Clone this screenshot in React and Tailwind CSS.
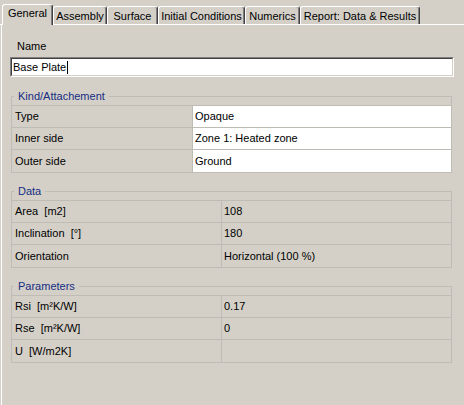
import React from "react";

const font = { fontFamily: '"Liberation Sans", Arial, sans-serif' };

function Tab({ label, w, selected }) {
  return (
    <div
      className={
        "flex items-center justify-center border-l border-t border-r border-l-white border-t-white border-r-[#404040] rounded-t-[3px] shadow-[inset_-1px_0_0_#808080] bg-[#d4d0c8] text-[11px] text-black whitespace-nowrap overflow-hidden " +
        (selected ? "h-[21px] mb-[-1px] relative z-10 pb-[3px]" : "h-[18px] pt-[1px]")
      }
      style={{ width: w }}
    >
      {label}
    </div>
  );
}

function Group({ title, rows, split, white }) {
  return (
    <div className="relative mt-[18px] first:mt-0 w-[441px] ml-[1px] border border-[#bfbcb5]">
      <div className="absolute left-[2px] top-[-7px] h-[13px] px-[4px] bg-[#d4d0c8] text-[11px] leading-[13px] text-[#142d82]">
        {title}
      </div>
      <div className="h-[9px] border-b border-[#bfbcb5]" />
      {rows.map(([k, v], i) => (
        <div
          key={i}
          className={"flex h-[22px] " + (i < rows.length - 1 ? "border-b border-[#bfbcb5]" : "")}
        >
          <div
            className="flex items-center pl-[3px] border-r border-[#bfbcb5] whitespace-pre text-[11px] text-black"
            style={{ width: split }}
          >
            {k}
          </div>
          <div
            className={
              "flex-1 flex items-center pl-[2px] whitespace-pre text-[11px] text-black " +
              (white ? "bg-white" : "")
            }
          >
            {v}
          </div>
        </div>
      ))}
    </div>
  );
}

export default function App() {
  return (
    <div className="w-[464px] h-[405px] bg-[#d4d0c8] overflow-hidden" style={font}>
      <div className="flex items-end h-[25px] border-b border-white">
        <div className="w-[2px]" />
        <Tab label="General" w={51} selected />
        <Tab label="Assembly" w={54} />
        <Tab label="Surface" w={51} />
        <Tab label="Initial Conditions" w={87} />
        <Tab label="Numerics" w={55} />
        <Tab label="Report: Data & Results" w={120} />
      </div>
      <div className="ml-[1px] h-[380px] border-l border-white pl-[8px]">
        <div className="pt-[15px] pl-[7px] h-[28px] text-[11px] leading-[13px] text-black">Name</div>
        <div className="mt-[4px] w-[444px] h-[20px] border border-t-[#808080] border-l-[#808080] border-b-white border-r-white">
          <div className="h-full border border-t-[#404040] border-l-[#404040] border-b-[#d4d0c8] border-r-[#d4d0c8] bg-white flex items-center pl-[1px] text-[11px] text-black">
            <span>Base Plate</span>
            <span className="inline-block w-[1px] h-[13px] bg-black ml-[1px]" />
          </div>
        </div>
        <div className="mt-[19px]">
          <Group
            title="Kind/Attachement"
            split={181}
            white
            rows={[
              ["Type", "Opaque"],
              ["Inner side", "Zone 1: Heated zone"],
              ["Outer side", "Ground"],
            ]}
          />
          <Group
            title="Data"
            split={210}
            rows={[
              ["Area  [m2]", "108"],
              ["Inclination  [°]", "180"],
              ["Orientation", "Horizontal (100 %)"],
            ]}
          />
          <Group
            title="Parameters"
            split={210}
            rows={[
              ["Rsi  [m²K/W]", "0.17"],
              ["Rse  [m²K/W]", "0"],
              ["U  [W/m2K]", ""],
            ]}
          />
        </div>
      </div>
    </div>
  );
}
